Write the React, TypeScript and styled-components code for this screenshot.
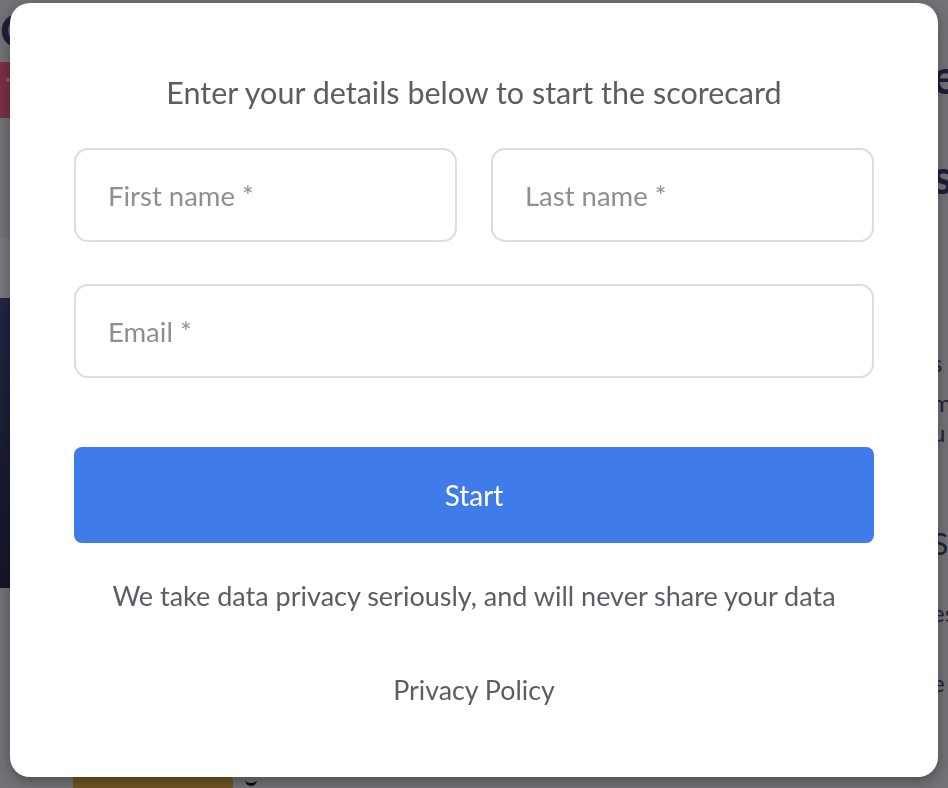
import React from 'react';
import styled, { createGlobalStyle } from 'styled-components';

const GlobalStyle = createGlobalStyle`
  html, body {
    margin: 0;
    padding: 0;
    background: #e4e4e6;
    overflow: hidden;
  }
  * {
    box-sizing: border-box;
  }
`;

const Page = styled.div`
  width: 948px;
  height: 788px;
  display: grid;
  grid-template-columns: 330px 1fr;
  font-family: Lato, "Liberation Sans", sans-serif;
  background: #e4e4e6;
  overflow: hidden;
`;

const LeftCol = styled.div`
  display: flex;
  flex-direction: column;
`;

const Logo = styled.div`
  margin: 4px 0 0 0;
  height: 52px;
  font-size: 46px;
  font-weight: 700;
  color: #33366f;
  line-height: 52px;
`;

const Badge = styled.div`
  margin-top: 6px;
  width: 150px;
  height: 56px;
  background: #f25a7c;
  color: #f4d7de;
  font-size: 30px;
  padding: 8px 0 0 6px;
  font-weight: 700;
`;

const HeroShade = styled.div`
  margin-top: 120px;
  height: 60px;
  width: 180px;
  border-radius: 0 90px 90px 0;
  background: #f2f2f4;
`;

const HeroImage = styled.div`
  height: 290px;
  width: 260px;
  background: linear-gradient(180deg, #3d4378 0%, #2a2d55 60%, #202241 100%);
  border-radius: 0 40px 40px 0;
`;

const BottomRow = styled.div`
  margin-top: 186px;
  display: flex;
  align-items: flex-start;
  gap: 12px;
  padding-left: 73px;
`;

const YellowCard = styled.div`
  width: 160px;
  height: 40px;
  background: #d9a93c;
  border-radius: 6px 6px 0 0;
`;

const Chevron = styled.div`
  margin-top: 2px;
  width: 12px;
  height: 10px;
  border-bottom: 3px solid #111;
  border-radius: 0 0 8px 8px;
`;

const RightCol = styled.div`
  padding: 52px 0 0 602px;
  color: #2f3266;
  white-space: nowrap;
  overflow: hidden;
`;

const BigLine = styled.div<{ $gap?: number }>`
  font-size: 48px;
  font-weight: 700;
  line-height: 48px;
  margin-top: ${(p) => p.$gap ?? 0}px;
`;

const SmallLine = styled.div<{ $gap?: number; $size?: number }>`
  font-size: ${(p) => p.$size ?? 24}px;
  line-height: 30px;
  color: #3b3e5e;
  margin-top: ${(p) => p.$gap ?? 0}px;
`;

const Overlay = styled.div`
  position: fixed;
  inset: 0;
  background: rgba(12, 12, 18, 0.52);
  display: flex;
  justify-content: center;
  align-items: flex-start;
  padding-top: 3px;
`;

const Modal = styled.div`
  width: 928px;
  background: #ffffff;
  border-radius: 20px;
  box-shadow: 0 4px 14px rgba(0, 0, 0, 0.35);
  padding: 70px 64px 69px;
  display: flex;
  flex-direction: column;
  font-family: Lato, "Liberation Sans", sans-serif;
`;

const Title = styled.h2`
  margin: 0;
  font-size: 30.5px;
  font-weight: 400;
  line-height: 38px;
  color: #5c5d63;
  text-align: center;
`;

const Fields = styled.div`
  margin-top: 37px;
  display: grid;
  grid-template-columns: 1fr 1fr;
  column-gap: 34px;
  row-gap: 42px;
`;

const Input = styled.input<{ $wide?: boolean }>`
  grid-column: ${(p) => (p.$wide ? '1 / -1' : 'auto')};
  height: 94px;
  width: 100%;
  border: 2px solid #dcdde2;
  border-radius: 14px;
  padding: 0 32px;
  font-family: inherit;
  font-size: 27.5px;
  color: #333;
  outline: none;
  background: #fff;

  &::placeholder {
    color: #8e8e94;
  }
`;

const StartButton = styled.button`
  margin-top: 69px;
  height: 96px;
  width: 100%;
  border: none;
  border-radius: 8px;
  background: #3f7be9;
  color: #ffffff;
  font-family: inherit;
  font-size: 28px;
  cursor: pointer;
`;

const Note = styled.p`
  margin: 35px 0 0;
  font-size: 27px;
  line-height: 36px;
  color: #5c5d63;
  text-align: center;
`;

const PolicyLink = styled.a`
  margin-top: 58px;
  font-size: 26.8px;
  line-height: 36px;
  color: #5c5d63;
  text-align: center;
  text-decoration: none;
`;

export default function App() {
  return (
    <>
      <GlobalStyle />
      <Page>
        <LeftCol>
          <Logo>Co</Logo>
          <Badge>TOP</Badge>
          <HeroShade />
          <HeroImage />
          <BottomRow>
            <YellowCard />
            <Chevron />
          </BottomRow>
        </LeftCol>
        <RightCol>
          <BigLine>e</BigLine>
          <BigLine $gap={52}>s</BigLine>
          <SmallLine $gap={148}>s</SmallLine>
          <SmallLine $gap={10}>m</SmallLine>
          <SmallLine>u</SmallLine>
          <SmallLine $gap={80} $size={30}>S</SmallLine>
          <SmallLine $gap={40}>es</SmallLine>
          <SmallLine $gap={40}>e</SmallLine>
        </RightCol>
      </Page>
      <Overlay>
        <Modal>
          <Title>Enter your details below to start the scorecard</Title>
          <Fields>
            <Input placeholder="First name *" />
            <Input placeholder="Last name *" />
            <Input $wide placeholder="Email *" />
          </Fields>
          <StartButton>Start</StartButton>
          <Note>We take data privacy seriously, and will never share your data</Note>
          <PolicyLink href="#">Privacy Policy</PolicyLink>
        </Modal>
      </Overlay>
    </>
  );
}
